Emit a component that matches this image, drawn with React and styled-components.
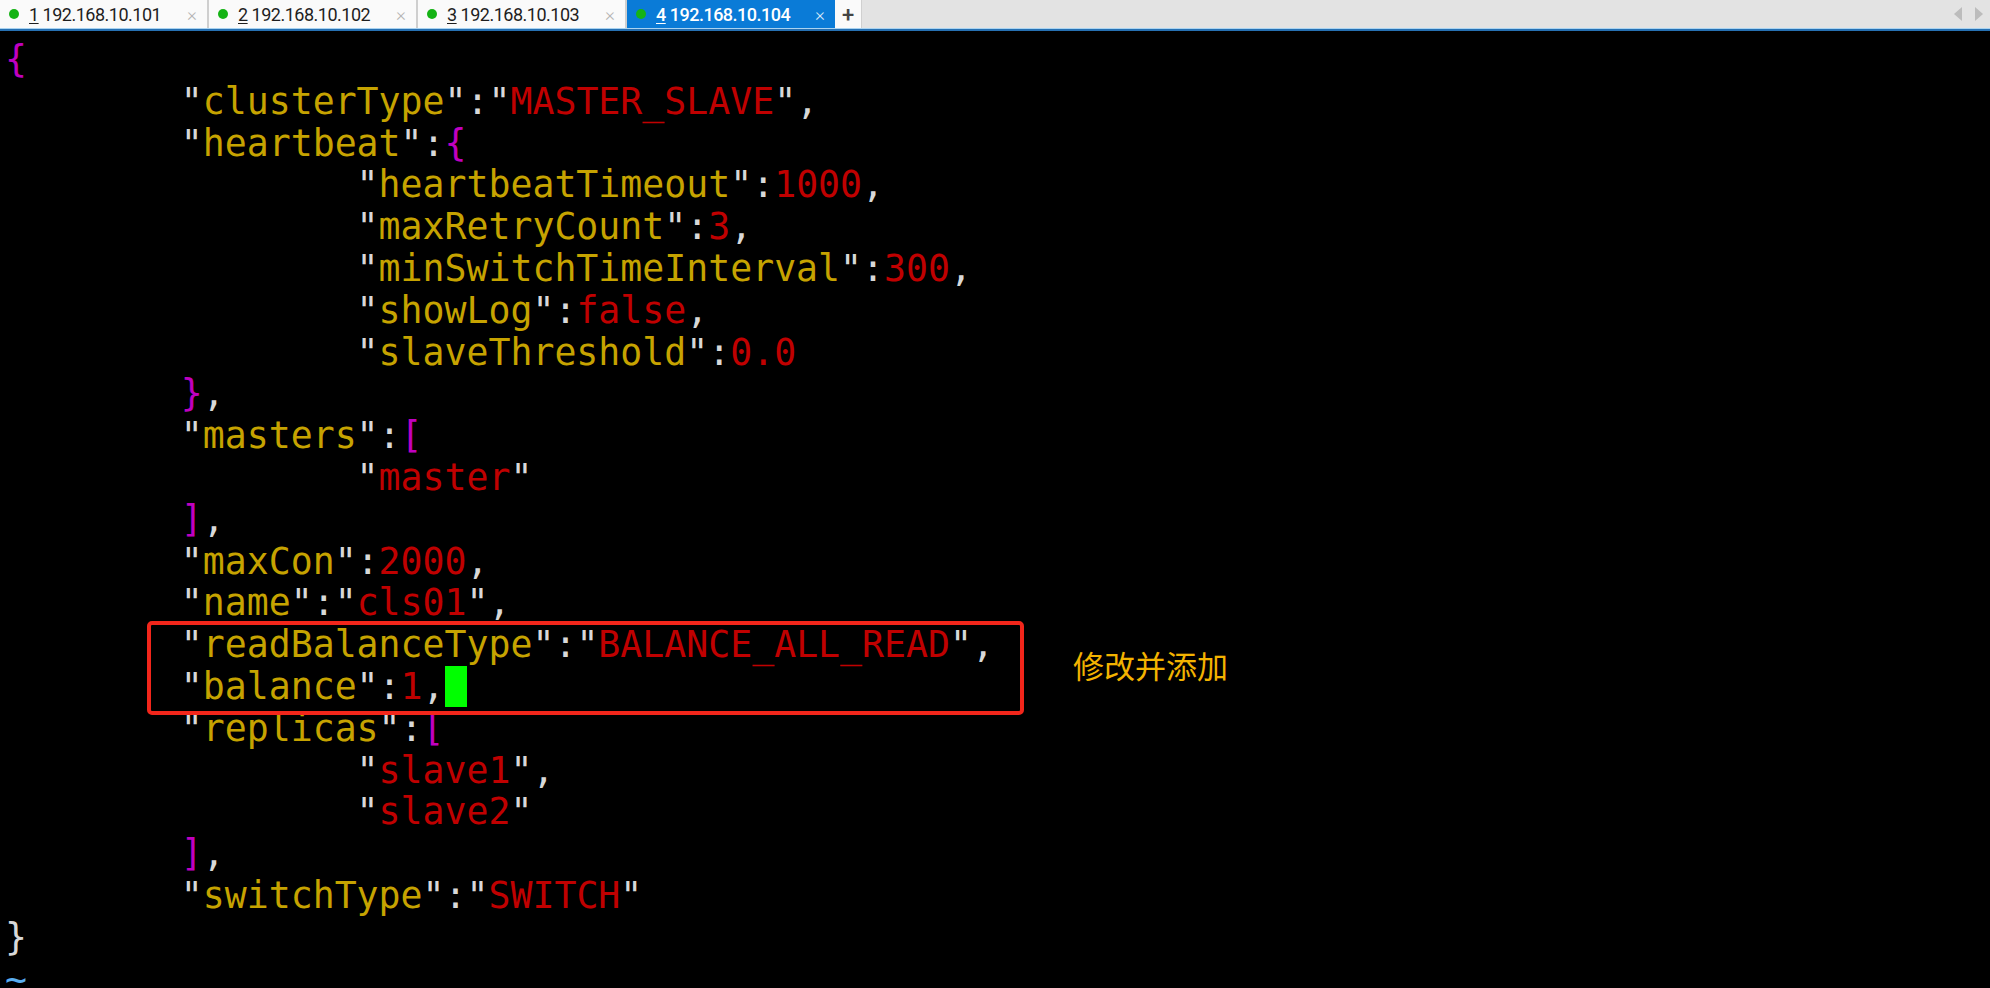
import React from "react";
import styled, { createGlobalStyle } from "styled-components";

const GlobalStyle = createGlobalStyle`
  html, body {
    margin: 0;
    padding: 0;
    height: 100%;
    overflow: hidden;
    background: #000;
  }
  #root {
    height: 100%;
  }
`;

const tabs = [
  { num: "1", host: "192.168.10.101" },
  { num: "2", host: "192.168.10.102" },
  { num: "3", host: "192.168.10.103" },
  { num: "4", host: "192.168.10.104", active: true },
];

const App = () => {
  return (
    <Screen>
      <GlobalStyle />
      <TabStrip>
        {tabs.map((t) => (
          <Tab key={t.num} $active={t.active}>
            <Dot />
            <TabLabel>
              <u>{t.num}</u> {t.host}
            </TabLabel>
            <Close $active={t.active}>×</Close>
          </Tab>
        ))}
        <PlusButton>+</PlusButton>
        <Arrows>
          <svg width="8" height="14" viewBox="0 0 8 14">
            <polygon points="8,0 8,14 0,7" fill="#bcbcbc" />
          </svg>
          <svg width="8" height="14" viewBox="0 0 8 14">
            <polygon points="0,0 0,14 8,7" fill="#bcbcbc" />
          </svg>
        </Arrows>
      </TabStrip>
      <Underline />

      <Terminal>
        <Line>
          <B>{"{"}</B>
        </Line>
        <Line $indent={1}>
          <K>clusterType</K>
          <P>:</P>
          <V>MASTER_SLAVE</V>
          <P>,</P>
        </Line>
        <Line $indent={1}>
          <K>heartbeat</K>
          <P>:</P>
          <B>{"{"}</B>
        </Line>
        <Line $indent={2}>
          <K>heartbeatTimeout</K>
          <P>:</P>
          <N>1000</N>
          <P>,</P>
        </Line>
        <Line $indent={2}>
          <K>maxRetryCount</K>
          <P>:</P>
          <N>3</N>
          <P>,</P>
        </Line>
        <Line $indent={2}>
          <K>minSwitchTimeInterval</K>
          <P>:</P>
          <N>300</N>
          <P>,</P>
        </Line>
        <Line $indent={2}>
          <K>showLog</K>
          <P>:</P>
          <N>false</N>
          <P>,</P>
        </Line>
        <Line $indent={2}>
          <K>slaveThreshold</K>
          <P>:</P>
          <N>0.0</N>
        </Line>
        <Line $indent={1}>
          <B>{"}"}</B>
          <P>,</P>
        </Line>
        <Line $indent={1}>
          <K>masters</K>
          <P>:</P>
          <B>[</B>
        </Line>
        <Line $indent={2}>
          <V>master</V>
        </Line>
        <Line $indent={1}>
          <B>]</B>
          <P>,</P>
        </Line>
        <Line $indent={1}>
          <K>maxCon</K>
          <P>:</P>
          <N>2000</N>
          <P>,</P>
        </Line>
        <Line $indent={1}>
          <K>name</K>
          <P>:</P>
          <V>cls01</V>
          <P>,</P>
        </Line>
        <Line $indent={1}>
          <K>readBalanceType</K>
          <P>:</P>
          <V>BALANCE_ALL_READ</V>
          <P>,</P>
        </Line>
        <Line $indent={1}>
          <K>balance</K>
          <P>:</P>
          <N>1</N>
          <P>,</P>
          <Cursor />
        </Line>
        <Line $indent={1}>
          <K>replicas</K>
          <P>:</P>
          <B>[</B>
        </Line>
        <Line $indent={2}>
          <V>slave1</V>
          <P>,</P>
        </Line>
        <Line $indent={2}>
          <V>slave2</V>
        </Line>
        <Line $indent={1}>
          <B>]</B>
          <P>,</P>
        </Line>
        <Line $indent={1}>
          <K>switchType</K>
          <P>:</P>
          <V>SWITCH</V>
        </Line>
        <Line>
          <P>{"}"}</P>
        </Line>
        <Line>
          <Tilde>~</Tilde>
        </Line>

        <Highlight />
        <Note>修改并添加</Note>
      </Terminal>
    </Screen>
  );
};

// quoted key / string value helpers
const K = ({ children }) => (
  <>
    <P>"</P>
    <KeyText>{children}</KeyText>
    <P>"</P>
  </>
);

const V = ({ children }) => (
  <>
    <P>"</P>
    <N>{children}</N>
    <P>"</P>
  </>
);

const Screen = styled.div`
  display: flex;
  flex-direction: column;
  height: 100%;
  background: #000;
`;

const TabStrip = styled.div`
  display: flex;
  flex-shrink: 0;
  align-items: stretch;
  height: 28px;
  background: #e3e3e3;
  font-family: Roboto, "Noto Sans", sans-serif;
  font-size: 18px;
`;

const Tab = styled.div`
  display: flex;
  align-items: center;
  box-sizing: border-box;
  width: ${(p) => (p.$active ? "208px" : "209px")};
  padding: 0 10px 0 9px;
  background: ${(p) => (p.$active ? "#0a7bd7" : "#fafafa")};
  color: ${(p) => (p.$active ? "#ffffff" : "#1e1e1e")};
  border-right: ${(p) => (p.$active ? "none" : "2px solid #cfcfcf")};
  font-weight: ${(p) => (p.$active ? 500 : 400)};
`;

const Dot = styled.span`
  width: 10px;
  height: 10px;
  border-radius: 50%;
  background: #15b315;
  margin-right: 10px;
  flex-shrink: 0;
`;

const TabLabel = styled.span`
  white-space: pre;
  letter-spacing: -0.5px;
  u {
    text-underline-offset: 2px;
  }
`;

const Close = styled.span`
  margin-left: auto;
  font-size: 19px;
  font-weight: 300;
  color: ${(p) => (p.$active ? "#d8e9f8" : "#b4b4b4")};
`;

const PlusButton = styled.div`
  display: flex;
  align-items: center;
  justify-content: center;
  width: 26px;
  background: #fafafa;
  color: #444;
  font-size: 22px;
  font-weight: 500;
  border-right: 1px solid #d0d0d0;
`;

const Arrows = styled.div`
  display: flex;
  align-items: center;
  gap: 13px;
  margin-left: auto;
  padding-right: 7px;
`;

const Underline = styled.div`
  flex-shrink: 0;
  height: 2px;
  border-top: 1px solid #a9d3f1;
  background: #2670b2;
`;

const Terminal = styled.div`
  position: relative;
  flex: 1;
  min-height: 0;
  overflow: hidden;
  padding: 8px 0 0 5px;
  background: #000;
  font-family: "DejaVu Sans Mono", "Liberation Mono", monospace;
  font-size: 36.5px;
  line-height: 41.8px;
  color: #d3d7cf;
`;

const Line = styled.div`
  height: 41.8px;
  white-space: pre;
  padding-left: ${(p) => (p.$indent || 0) * 8}ch;
`;

const P = styled.span`
  color: #d8d8d8;
`;

const KeyText = styled.span`
  color: #c6a300;
`;

const N = styled.span`
  color: #c00000;
`;

const B = styled.span`
  color: #c000c0;
`;

const Tilde = styled.span`
  color: #5aaef0;
`;

const Cursor = styled.span`
  display: inline-block;
  width: 1ch;
  height: 41px;
  vertical-align: top;
  background: #00ff00;
`;

const Highlight = styled.div`
  position: absolute;
  left: 147px;
  top: 590px;
  width: 877px;
  height: 94px;
  box-sizing: border-box;
  border: 4px solid #f2261b;
  border-radius: 5px;
`;

const Note = styled.div`
  position: absolute;
  left: 1073px;
  top: 618px;
  font-family: "Noto Sans CJK SC", "Noto Sans", sans-serif;
  font-size: 31px;
  line-height: 31px;
  color: #f3b300;
`;

export default App;
